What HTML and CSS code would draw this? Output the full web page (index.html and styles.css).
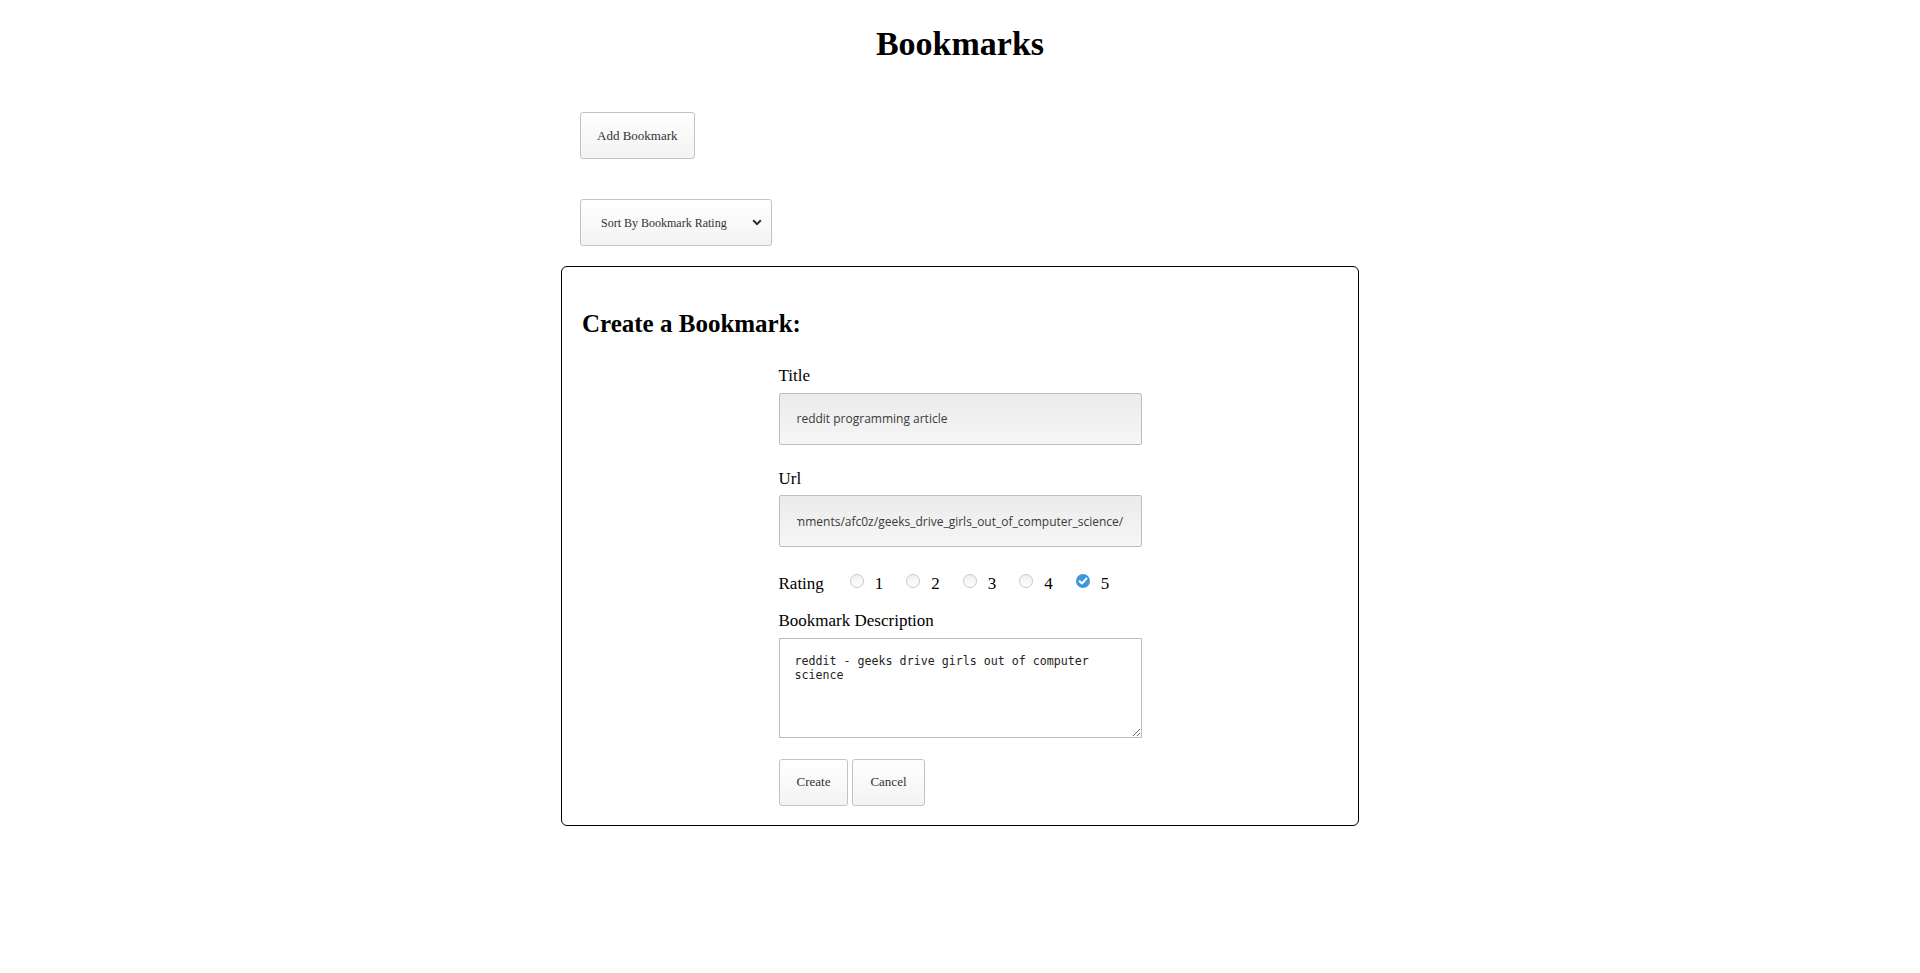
FILE: index.html
```html
<!DOCTYPE html>
<html lang="en">
<head>
<meta charset="utf-8">
<title>Bookmarks</title>
<link rel="stylesheet" href="styles.css">
</head>
<body>
<div class="page">
  <h1 class="title">Bookmarks</h1>
  <div class="toolbar">
    <button class="btn btn-add" type="button">Add Bookmark</button>
    <div class="select-wrap">
      <select class="sort">
        <option>Sort By Bookmark Rating</option>
      </select>
      <svg class="chevron" width="10" height="7" viewBox="0 0 10 7"><path d="M1.2 1.3 5 5.1 8.8 1.3" fill="none" stroke="#2b2b2b" stroke-width="2"/></svg>
    </div>
  </div>
  <div class="panel">
    <h2 class="panel-title">Create a Bookmark:</h2>
    <form class="form">
      <div class="field">
        <label class="label" for="title">Title</label>
        <input class="text-input" id="title" type="text" value="reddit programming article">
      </div>
      <div class="field">
        <label class="label" for="url">Url</label>
        <input class="text-input" id="url" type="text" value="https://www.reddit.com/r/programming/comments/afc0z/geeks_drive_girls_out_of_computer_science/">
      </div>
      <div class="rating">
        <span class="label rating-label">Rating</span>
        <label class="opt"><input class="radio-native" type="radio" name="rating" value="1"><span class="radio"></span><span class="num">1</span></label>
        <label class="opt"><input class="radio-native" type="radio" name="rating" value="2"><span class="radio"></span><span class="num">2</span></label>
        <label class="opt"><input class="radio-native" type="radio" name="rating" value="3"><span class="radio"></span><span class="num">3</span></label>
        <label class="opt"><input class="radio-native" type="radio" name="rating" value="4"><span class="radio"></span><span class="num">4</span></label>
        <label class="opt"><input class="radio-native" type="radio" name="rating" value="5" checked><span class="radio radio-on"><svg width="14" height="14" viewBox="0 0 14 14"><path d="M3.6 7.2 6 9.5 10.4 4.6" fill="none" stroke="#fff" stroke-width="2" stroke-linecap="round" stroke-linejoin="round"/></svg></span><span class="num">5</span></label>
      </div>
      <div class="field">
        <label class="label" for="desc">Bookmark Description</label>
        <textarea class="textarea" id="desc" spellcheck="false">reddit - geeks drive girls out of computer science</textarea>
      </div>
      <div class="actions">
        <button class="btn btn-small" type="button">Create</button>
        <button class="btn btn-small" type="button">Cancel</button>
      </div>
    </form>
  </div>
</div>
<script src="script.js"></script>
</body>
</html>
```

FILE: styles.css
```css
* { box-sizing: border-box; }
html, body { margin: 0; padding: 0; background: #fff; }
body { font-family: "Liberation Serif", "Times New Roman", serif; color: #000; }

.page {
  width: 800px;
  margin: 0 auto;
  padding-top: 24px;
}

.title {
  margin: 0;
  text-align: center;
  font-size: 34px;
  line-height: 40px;
  font-weight: 700;
}

.toolbar {
  margin-top: 48px;
  padding-left: 20px;
  display: flex;
  flex-direction: column;
  align-items: flex-start;
  gap: 40px;
}

.btn {
  font-family: "Liberation Serif", "Times New Roman", serif;
  font-size: 13px;
  color: #333;
  background: linear-gradient(#ffffff, #f3f3f3);
  border: 1px solid #c3c3c3;
  border-radius: 3px;
  cursor: pointer;
}

.btn-add {
  height: 47px;
  padding: 0 16px;
}

.select-wrap {
  position: relative;
  width: 192px;
  height: 47px;
}

.sort {
  appearance: none;
  -webkit-appearance: none;
  width: 192px;
  height: 47px;
  padding: 0 30px 0 20px;
  font-family: "Liberation Serif", "Times New Roman", serif;
  font-size: 12px;
  color: #333;
  background: linear-gradient(#ffffff, #f3f3f3);
  border: 1px solid #c3c3c3;
  border-radius: 3px;
}

.chevron {
  position: absolute;
  left: 172px;
  top: 20px;
  pointer-events: none;
}

.panel {
  margin-top: 20px;
  margin-left: 1px;
  width: 798px;
  height: 560px;
  border: 1px solid #000;
  border-radius: 6px;
  padding: 42px 20px 20px 20px;
}

.panel-title {
  margin: 0;
  font-size: 25px;
  line-height: 30px;
  font-weight: 700;
}

.form {
  width: 363px;
  margin: 25px auto 0;
}

.field { display: flex; flex-direction: column; margin-bottom: 22px; }

.label {
  font-size: 17px;
  line-height: 20px;
  padding-top: 2px;
  margin-bottom: 6.6px;
}

.text-input {
  width: 363px;
  height: 52px;
  padding: 0 17px;
  font-family: "Open Sans", "Noto Sans", sans-serif;
  font-size: 12px;
  color: #3a3a3a;
  background: linear-gradient(#ebebeb, #f6f6f6);
  border: 1px solid #bdbdbd;
  border-radius: 2px;
  outline: none;
}

.rating {
  display: flex;
  align-items: center;
  height: 20px;
  margin-top: 27px;
  margin-bottom: 15px;
}

.rating-label { padding-top: 0; margin-bottom: 0; margin-right: 26px; }

.opt {
  display: inline-flex;
  align-items: center;
  margin-right: 23px;
  font-size: 17px;
  line-height: 20px;
}

.radio-native {
  position: absolute;
  opacity: 0;
  width: 0;
  height: 0;
  margin: 0;
}

.radio {
  display: inline-flex;
  width: 14px;
  height: 14px;
  border-radius: 50%;
  border: 1px solid #c8c8c8;
  background: linear-gradient(#f0f0f0, #ffffff);
  margin-right: 11px;
  margin-top: -6px;
}

.radio-on {
  border: none;
  background: #3c98de;
}

.num { display: inline-block; }

.textarea {
  width: 363px;
  height: 100px;
  padding: 15px 15px 14px;
  font-family: "DejaVu Sans Mono", "Liberation Mono", monospace;
  font-size: 11.65px;
  line-height: 14.5px;
  color: #222;
  border: 1px solid #bdbdbd;
  border-radius: 0;
  background: #fff;
  outline: none;
}

.actions {
  display: flex;
  gap: 4px;
  margin-top: -1px;
}

.btn-small {
  height: 47px;
  padding: 0 17px;
}
```

FILE: script.js
```js
var u = document.getElementById('url');
if (u) { u.scrollLeft = u.scrollWidth; }
```
